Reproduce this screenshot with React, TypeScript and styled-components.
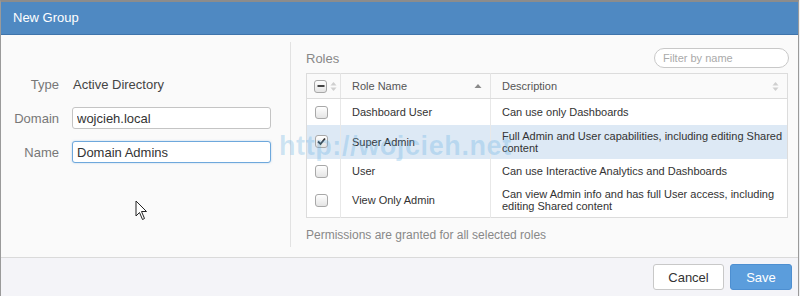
import React from "react";
import styled, { createGlobalStyle } from "styled-components";

const Global = createGlobalStyle`
  html, body { margin: 0; padding: 0; background: #eef0f3; }
  body { font-family: "Liberation Sans", Arial, sans-serif; }
  * { box-sizing: border-box; }
`;

const Dialog = styled.div`
  position: relative;
  width: 799px;
  height: 296px;
  border-top: 2px solid #8c8c8c;
  border-left: 1px solid #9a9a9a;
  border-right: 1px solid #9a9a9a;
  background: #fafafa;
  display: flex;
  flex-direction: column;
  overflow: hidden;
`;

const TitleBar = styled.div`
  height: 33px;
  background: #4f89c2;
  border-bottom: 1px solid #3f74ab;
  color: #fff;
  font-size: 13px;
  display: flex;
  align-items: center;
  padding-left: 12px;
  padding-bottom: 1px;
`;

const Content = styled.div`
  height: 222px;
  display: flex;
`;

const LeftPanel = styled.div`
  width: 289px;
  padding-top: 38px;
`;

const Divider = styled.div`
  width: 1px;
  background: #e2e2e2;
  margin: 7px 0 10px;
`;

const Form = styled.div`
  display: grid;
  grid-template-columns: 58px 199px;
  column-gap: 13px;
  row-gap: 12px;
  grid-auto-rows: 22px;
  align-items: center;
  font-size: 13px;
`;

const Label = styled.div`
  text-align: right;
  color: #777;
`;

const Value = styled.div`
  color: #444;
  padding-left: 1px;
`;

const TextInput = styled.input<{ $focused?: boolean }>`
  height: 22px;
  width: 199px;
  border: 1px solid ${(p) => (p.$focused ? "#6ea8dc" : "#c4c4c4")};
  border-radius: 3px;
  padding: 0 4px;
  font: inherit;
  font-size: 13px;
  color: #333;
  background: #fff;
  outline: none;
  box-shadow: ${(p) => (p.$focused ? "0 0 2px rgba(110,168,220,0.5)" : "none")};
`;

const RightPanel = styled.div`
  flex: 1;
  padding: 13px 9px 0 15px;
  display: flex;
  flex-direction: column;
`;

const RolesHead = styled.div`
  display: flex;
  align-items: center;
  justify-content: space-between;
  height: 20px;
  margin-bottom: 5px;
`;

const RolesTitle = styled.div`
  color: #888;
  font-size: 13px;
`;

const Filter = styled.input`
  width: 135px;
  height: 20px;
  border: 1px solid #c8c8c8;
  border-radius: 10px;
  padding: 0 8px;
  font: inherit;
  font-size: 11px;
  background: #fff;
  outline: none;
  &::placeholder { color: #aaa; }
`;

const Table = styled.table`
  width: 482px;
  border-collapse: collapse;
  border: 1px solid #dcdcdc;
  table-layout: fixed;
  font-size: 11px;
  background: #fff;
`;

const Th = styled.th<{ $w?: number }>`
  ${(p) => (p.$w ? `width: ${p.$w}px;` : "")}
  height: 25px;
  background: #fafafa;
  border-bottom: 1px solid #dcdcdc;
  border-left: 1px solid #e4e4e4;
  color: #555;
  font-weight: normal;
  text-align: left;
  padding: 0 8px 0 11px;
  &:first-child { border-left: none; padding: 0 0 0 7px; }
`;

const HeadInner = styled.div<{ $start?: boolean }>`
  display: flex;
  align-items: center;
  justify-content: ${(p) => (p.$start ? "flex-start" : "space-between")};
  gap: 3px;
`;

const Tr = styled.tr<{ $sel?: boolean; $h: number }>`
  height: ${(p) => p.$h}px;
  background: ${(p) => (p.$sel ? "#dde9f5" : "#fff")};
`;

const Td = styled.td`
  border-left: 1px solid #e8e8e8;
  color: #333;
  padding: 0 2px 0 11px;
  line-height: 12px;
  vertical-align: middle;
  &:first-child { border-left: none; padding: 0 0 0 8px; }
`;

const Box = styled.span`
  width: 13px;
  height: 13px;
  border: 1px solid #a8a8a8;
  border-radius: 3px;
  background: linear-gradient(#ffffff, #e4e4e4);
  display: inline-flex;
  align-items: center;
  justify-content: center;
  vertical-align: middle;
`;

const Note = styled.div`
  margin-top: 10px;
  font-size: 12px;
  color: #888;
`;

const Footer = styled.div`
  flex: 1;
  border-top: 1px solid #dadada;
  background: #f4f4f8;
  display: flex;
  justify-content: flex-end;
  align-items: flex-start;
  gap: 6px;
  padding: 6px 6px 0 0;
`;

const Button = styled.button<{ $primary?: boolean }>`
  height: 26px;
  padding: 0;
  width: ${(p) => (p.$primary ? 62 : 71)}px;
  border-radius: 3px;
  font: inherit;
  font-size: 13px;
  border: 1px solid ${(p) => (p.$primary ? "#4d8fd1" : "#c8c8c8")};
  background: ${(p) => (p.$primary ? "#5b9ddc" : "#fff")};
  color: ${(p) => (p.$primary ? "#fff" : "#333")};
`;

const Watermark = styled.div`
  position: absolute;
  left: 278px;
  top: 129px;
  font-size: 27px;
  font-weight: bold;
  color: rgba(90, 170, 225, 0.28);
  pointer-events: none;
  letter-spacing: 0.6px;
`;

const Cursor = styled.svg`
  position: absolute;
  left: 134px;
  top: 198px;
`;

const SortPair = () => (
  <svg width="7" height="11" viewBox="0 0 7 11">
    <path d="M3.5 1 L6.5 4.5 L0.5 4.5 Z" fill="#cfcfcf" />
    <path d="M3.5 10 L6.5 6.5 L0.5 6.5 Z" fill="#cfcfcf" />
  </svg>
);

const SortUp = () => (
  <svg width="8" height="6" viewBox="0 0 8 6">
    <path d="M4 1 L7.5 5 L0.5 5 Z" fill="#8a8a8a" />
  </svg>
);

const Check = ({ checked, minus }: { checked?: boolean; minus?: boolean }) => (
  <Box>
    {checked && (
      <svg width="9" height="9" viewBox="0 0 9 9">
        <path d="M1 4.5 L3.5 7 L8 1.5" stroke="#333" strokeWidth="1.8" fill="none" />
      </svg>
    )}
    {minus && (
      <svg width="8" height="8" viewBox="0 0 8 8">
        <rect x="0.5" y="3" width="7" height="2" fill="#444" />
      </svg>
    )}
  </Box>
);

const roles = [
  { name: "Dashboard User", desc: "Can use only Dashboards", h: 26, sel: false },
  { name: "Super Admin", desc: "Full Admin and User capabilities, including editing Shared content", h: 34, sel: true },
  { name: "User", desc: "Can use Interactive Analytics and Dashboards", h: 25, sel: false },
  { name: "View Only Admin", desc: "Can view Admin info and has full User access, including editing Shared content", h: 34, sel: false },
];

export default function App() {
  return (
    <>
      <Global />
      <Dialog>
        <TitleBar>New Group</TitleBar>
        <Content>
          <LeftPanel>
            <Form>
              <Label>Type</Label>
              <Value>Active Directory</Value>
              <Label>Domain</Label>
              <TextInput defaultValue="wojcieh.local" />
              <Label>Name</Label>
              <TextInput $focused defaultValue="Domain Admins" />
            </Form>
          </LeftPanel>
          <Divider />
          <RightPanel>
            <RolesHead>
              <RolesTitle>Roles</RolesTitle>
              <Filter placeholder="Filter by name" />
            </RolesHead>
            <Table>
              <thead>
                <tr>
                  <Th $w={34}>
                    <HeadInner $start>
                      <Check minus />
                      <SortPair />
                    </HeadInner>
                  </Th>
                  <Th $w={150}>
                    <HeadInner>
                      <span>Role Name</span>
                      <SortUp />
                    </HeadInner>
                  </Th>
                  <Th>
                    <HeadInner>
                      <span>Description</span>
                      <SortPair />
                    </HeadInner>
                  </Th>
                </tr>
              </thead>
              <tbody>
                {roles.map((r) => (
                  <Tr key={r.name} $h={r.h} $sel={r.sel}>
                    <Td>
                      <Check checked={r.sel} />
                    </Td>
                    <Td>{r.name}</Td>
                    <Td>{r.desc}</Td>
                  </Tr>
                ))}
              </tbody>
            </Table>
            <Note>Permissions are granted for all selected roles</Note>
          </RightPanel>
        </Content>
        <Footer>
          <Button>Cancel</Button>
          <Button $primary>Save</Button>
        </Footer>
        <Watermark>http://wojcieh.net</Watermark>
        <Cursor width="14" height="22" viewBox="0 0 14 22">
          <path d="M1 1 L1 16 L4.5 12.5 L7.5 19.5 L9.5 18.5 L6.5 11.5 L11.5 11.5 Z" fill="#fff" stroke="#222" strokeWidth="1" />
        </Cursor>
      </Dialog>
    </>
  );
}
